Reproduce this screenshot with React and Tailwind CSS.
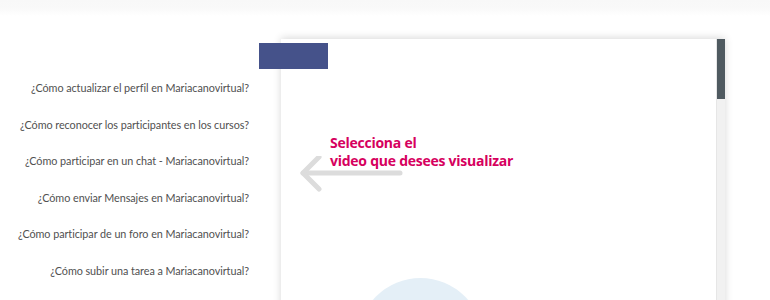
import React from "react";

const items = [
  "¿Cómo actualizar el perfil en Mariacanovirtual?",
  "¿Cómo reconocer los participantes en los cursos?",
  "¿Cómo participar en un chat - Mariacanovirtual?",
  "¿Cómo enviar Mensajes en Mariacanovirtual?",
  "¿Cómo participar de un foro en Mariacanovirtual?",
  "¿Cómo subir una tarea a Mariacanovirtual?",
];

export default function App() {
  return (
    <div className="w-[770px] h-[300px] overflow-hidden bg-white relative">
      <div className="h-[16px] bg-gradient-to-b from-[#f8f8f8] via-[#f9f9f9] to-white" />
      <div className="flex pt-[23px]">
        <div className="w-[249px] flex flex-col items-end pt-[42px] text-[#505050] text-[10.8px] leading-[14px] tracking-[-0.05px]" style={{ fontFamily: "Lato, 'Open Sans', sans-serif" }}>
          {items.map((t) => (
            <div key={t} className="h-[36.6px] whitespace-nowrap">{t}</div>
          ))}
        </div>
        <div className="ml-[32px] relative flex w-[444px] h-[300px] bg-white shadow-[0_-1px_8px_rgba(0,0,0,0.16)]">
          <div className="absolute left-[-22px] top-[4px] w-[69px] h-[26px] bg-[#45528a]" />
          <div className="flex-1 relative">
            <div className="absolute left-[19px] top-[117px]">
              <svg width="104" height="40" viewBox="0 0 104 40">
                <g stroke="#dcdcdc" strokeWidth="5" strokeLinecap="round" strokeLinejoin="round" fill="none">
                  <path d="M3 17 H100" />
                  <path d="M19 1 L3 17 L19 33" />
                </g>
              </svg>
            </div>
            <div className="absolute left-[49px] top-[95px] text-[#d6005e] font-bold text-[14px] leading-[18px] tracking-[-0.25px]" style={{ fontFamily: "'Open Sans', sans-serif" }}>
              <div>Selecciona el</div>
              <div>video que desees visualizar</div>
            </div>
            <div className="absolute left-[77px] top-[239px] w-[125px] h-[125px] rounded-full bg-[#e4eff7]" />
          </div>
          <div className="w-[9px] bg-[#f1f1f1] border-l border-[#e6e6e6]">
            <div className="h-[60px] bg-[#4f5a60]" />
          </div>
        </div>
      </div>
    </div>
  );
}
